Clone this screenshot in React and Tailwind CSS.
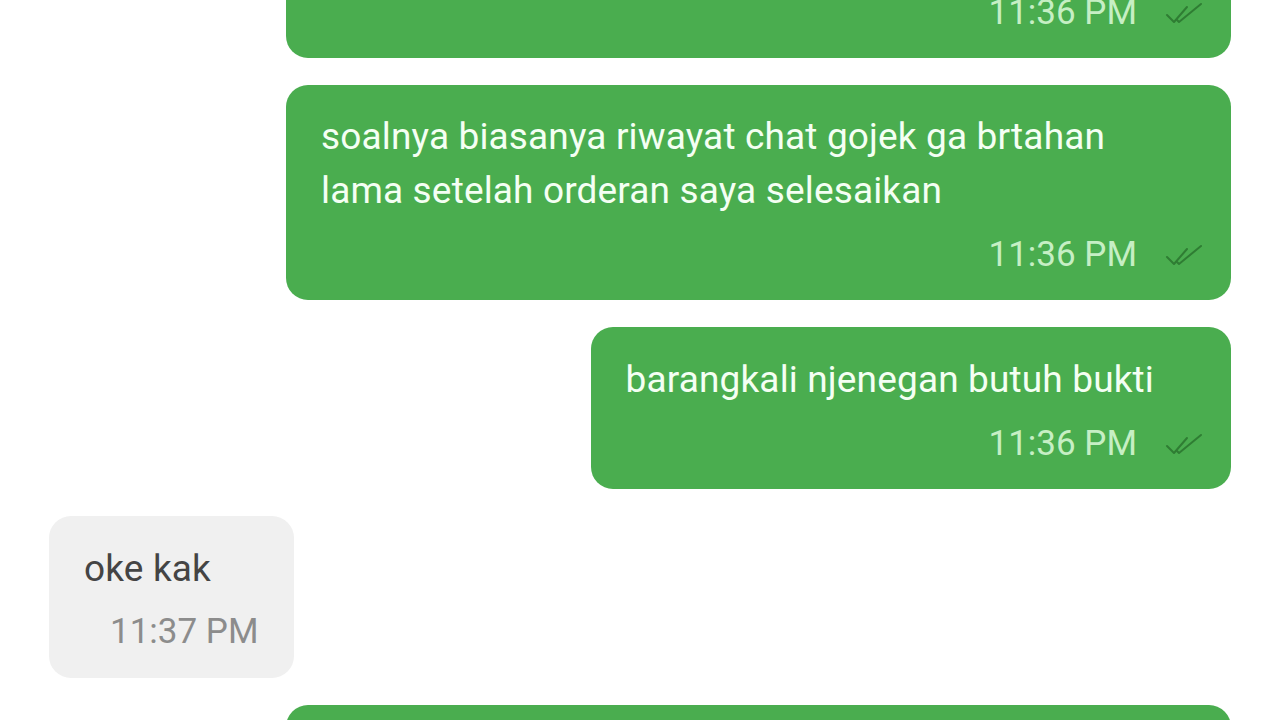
// Chat thread: outgoing green bubbles on the right, incoming grey bubble on the left
function Ticks() {
  return (
    <svg width="40" height="24" viewBox="0 0 40 24" fill="none" className="shrink-0">
      <path d="M2 14 L9 21 L22 6" stroke="#2f7d33" strokeWidth="2" strokeLinecap="round" strokeLinejoin="round" />
      <path d="M12 19 L14 21 L36 3" stroke="#2f7d33" strokeWidth="2" strokeLinecap="round" strokeLinejoin="round" />
    </svg>
  );
}

function Sent({ lines, time, className = "" }) {
  return (
    <div className="flex justify-end">
      <div className={`max-w-[945px] rounded-[22px] bg-[#4aad4f] pl-[35px] pr-[26px] pb-[24px] ${className}`}>
        {lines && (
          <div className="pr-[51px] text-[37px] leading-[54px] tracking-[0.15px] text-[#f4fff3]">
            {lines.map((l) => (
              <div key={l}>{l}</div>
            ))}
          </div>
        )}
        <div className="mt-[16px] flex items-center justify-end gap-[28px]">
          <span className="text-[35px] leading-[42px] text-[#c6efc4]">{time}</span>
          <Ticks />
        </div>
      </div>
    </div>
  );
}

export default function App() {
  return (
    <div
      className="h-[720px] w-[1280px] overflow-hidden bg-white px-[49px]"
      style={{ fontFamily: "Roboto, 'Noto Sans', sans-serif" }}
    >
      <div className="mt-[-118px] flex flex-col gap-[27px]">
        <Sent time="11:36 PM" className="w-[945px] pt-[94px]" />
        <Sent
          lines={["soalnya biasanya riwayat chat gojek ga brtahan", "lama setelah orderan saya selesaikan"]}
          time="11:36 PM"
          className="w-[945px] pt-[25px]"
        />
        <Sent lines={["barangkali njenegan butuh bukti"]} time="11:36 PM" className="pt-[26px]" />

        <div className="flex justify-start">
          <div className="rounded-[22px] bg-[#f0f0f0] pl-[35px] pr-[36px] pt-[26px] pb-[25px]">
            <div className="text-[37px] leading-[53px] tracking-[0.15px] text-[#444444]">oke kak</div>
            <div className="mt-[16px] pl-[26px] text-right text-[35px] leading-[42px] text-[#8c8c8c]">11:37 PM</div>
          </div>
        </div>

        <div className="flex justify-end">
          <div className="h-[160px] w-[945px] rounded-[22px] bg-[#4aad4f]" />
        </div>
      </div>
    </div>
  );
}
